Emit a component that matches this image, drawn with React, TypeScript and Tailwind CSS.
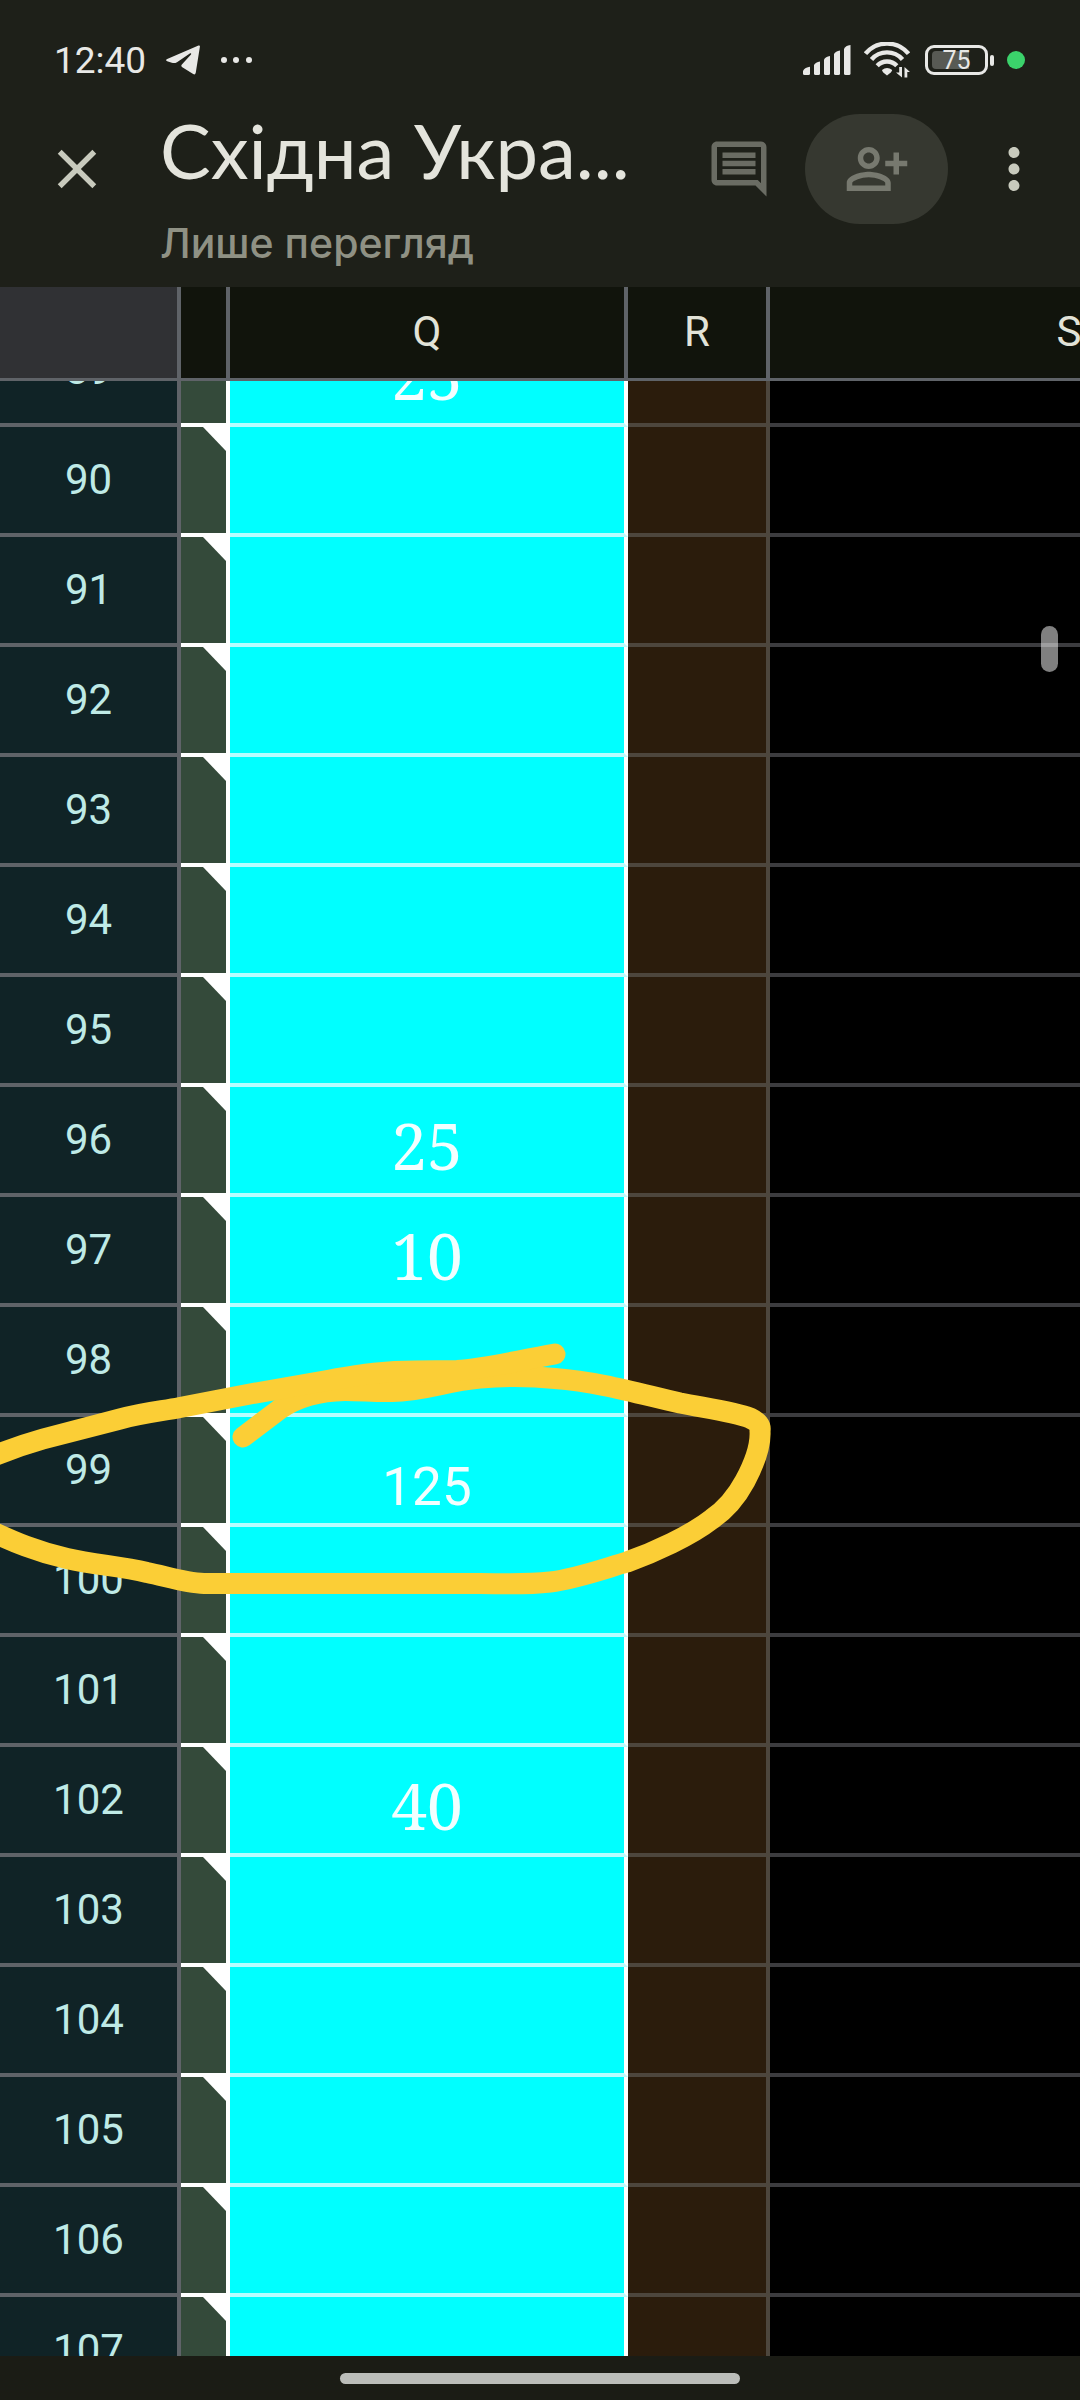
import { useLayoutEffect, useRef } from "react";
import { MdClose, MdMoreVert, MdOutlineComment } from "react-icons/md";

type Row = { n: number; value?: string; sans?: boolean };

const VALUES: Record<number, Omit<Row, "n">> = {
  89: { value: "25" },
  96: { value: "25" },
  97: { value: "10" },
  99: { value: "125", sans: true },
  102: { value: "40" },
};

const ROWS: Row[] = Array.from({ length: 19 }, (_, i) => ({ n: 89 + i, ...VALUES[89 + i] }));

// Part of row 89 that is already scrolled under the column header
const INITIAL_SCROLL = 64;

export default function App() {
  return (
    <div className="flex h-screen flex-col overflow-hidden bg-[#1e2019] font-['Roboto',sans-serif]">
      <StatusBar />
      <TopBar />
      <Sheet />
      <footer className="flex h-11 shrink-0 items-center justify-center bg-[#1b1c15]">
        <div className="h-[11px] w-[37%] rounded-full bg-[#bbbdb9]" />
      </footer>
    </div>
  );
}

function StatusBar() {
  return (
    <div className="flex h-[114px] shrink-0 items-center justify-between pr-[55px] pl-[54px] pt-[6px] text-[#e8e8e6]">
      <div className="flex items-center gap-5">
        <span className="text-[37px] leading-none">12:40</span>
        <TelegramIcon />
        <svg viewBox="0 0 32 8" className="h-2 w-8" fill="currentColor" aria-hidden>
          <circle cx="4" cy="4" r="3" />
          <circle cx="16" cy="4" r="3" />
          <circle cx="29" cy="4" r="3" />
        </svg>
      </div>
      <div className="flex items-center">
        <SignalIcon />
        <WifiIcon />
        <div className="ml-[15px] flex items-center gap-[2px]">
          <div className="relative flex h-[30px] w-[63px] items-center justify-center rounded-[9px] border-3 border-[#e8e8e6]">
            <div className="absolute inset-y-[3px] left-1 w-[37px] rounded-l-[4px] bg-[#585a54]" />
            <span className="relative text-[25px] leading-none">75</span>
          </div>
          <div className="h-[11px] w-1 rounded-full bg-[#e8e8e6]" />
        </div>
        <div className="ml-[13px] size-[18px] rounded-full bg-[#3bd26b]" />
      </div>
    </div>
  );
}

function TopBar() {
  return (
    <header className="flex shrink-0 items-start pb-[14px] pr-[33px] pl-[44px]">
      <button aria-label="Закрити" className="flex h-[110px] items-center text-[#c8cabd]">
        <MdClose className="size-[66px]" />
      </button>
      <div className="ml-[50px] min-w-0 flex-1 whitespace-nowrap">
        <h1 className="font-['Lato',sans-serif] text-[76px] leading-[72px] text-[#e4e4dc]">Східна Укра...</h1>
        <p className="mt-[27px] font-['Inter',sans-serif] text-[41px] font-medium leading-[60px] text-[#8f9184]">
          Лише перегляд
        </p>
      </div>
      <div className="flex items-center gap-[33px]">
        <button aria-label="Коментарі" className="text-[#6a6c63]">
          <MdOutlineComment className="size-[66px]" />
        </button>
        <button
          aria-label="Надати доступ"
          className="flex h-[110px] w-[143px] items-center justify-center rounded-full bg-[#363830] text-[#77796f]"
        >
          <PersonAddIcon />
        </button>
        <button aria-label="Інші опції" className="text-[#c8cabd]">
          <MdMoreVert className="size-[66px]" />
        </button>
      </div>
    </header>
  );
}

function Sheet() {
  const ref = useRef<HTMLDivElement>(null);

  useLayoutEffect(() => {
    if (ref.current) ref.current.scrollTop = INITIAL_SCROLL;
  }, []);

  const head =
    "sticky top-0 z-10 h-[94px] border-b-3 border-[#5f6368] p-0 pb-[2px] text-[42px] font-normal text-[#e2e3d8]";

  return (
    <main className="relative min-h-0 flex-1 overflow-hidden bg-black">
      <div ref={ref} className="h-full overflow-auto [scrollbar-width:none]">
        <table className="w-[1368px] table-fixed border-separate border-spacing-0">
          <colgroup>
            <col className="w-[181px]" />
            <col className="w-[49px]" />
            <col className="w-[398px]" />
            <col className="w-[142px]" />
            <col className="w-[598px]" />
          </colgroup>
          <thead>
            <tr>
              <td className={`${head} border-r-4 bg-[#303134]`} />
              <td className={`${head} border-r-4 bg-[#11140c]`} />
              <th scope="col" className={`${head} border-r-4 bg-[#11140c]`}>Q</th>
              <th scope="col" className={`${head} border-r-4 bg-[#11140c]`}>R</th>
              <th scope="col" className={`${head} bg-[#11140c]`}>S</th>
            </tr>
          </thead>
          <tbody>
            {ROWS.map((row) => (
              <SheetRow key={row.n} {...row} />
            ))}
          </tbody>
        </table>
      </div>

      {/* scroll thumb */}
      <div className="absolute right-[22px] top-[339px] h-[46px] w-[17px] rounded-full bg-white/50" />

      <Marker />
    </main>
  );
}

function SheetRow({ n, value, sans }: Row) {
  return (
    <tr>
      <th
        scope="row"
        className="h-[110px] border-b-4 border-r-4 border-[#5f6368] bg-[#102326] p-0 text-[42px] font-normal leading-none text-[#bfeae6]"
      >
        {n}
      </th>
      <td className="relative border-b-4 border-r-4 border-white bg-[#344a3a] p-0">
        {/* note corner */}
        <svg viewBox="0 0 23 24" className="absolute right-0 top-0 h-6 w-[23px]" aria-hidden>
          <path d="M0 0H23V24Z" fill="#fff" />
        </svg>
      </td>
      <td className="border-b-4 border-r-4 border-b-[#b8fdff] border-r-white bg-[#00ffff] p-0 pb-1 text-center align-bottom text-[#f2ffff]">
        {value && (
          <span
            className={
              sans
                ? "block text-[53px] leading-[64px]"
                : "block font-['Noto_Serif','DejaVu_Serif',serif] text-[64px] leading-[86px]"
            }
          >
            {value}
          </span>
        )}
      </td>
      <td className="border-b-4 border-r-4 border-[#4d463d] bg-[#2b1c0c] p-0" />
      <td className="border-b-4 border-[#3c3c3f] bg-black p-0" />
    </tr>
  );
}

/** Freehand loop drawn round row 99. */
function Marker() {
  return (
    <svg
      viewBox="0 1340 1080 260"
      className="pointer-events-none absolute left-0 top-[1053px] z-20 h-[260px] w-[1080px]"
      fill="none"
      stroke="#fbce36"
      strokeWidth="21"
      strokeLinecap="round"
      strokeLinejoin="round"
      aria-hidden
    >
      <path
        d="M243 1437 L280 1409 C300 1395 322 1391 345 1390.500
        C362 1390.500 375 1392 392 1391.500 C425 1391 445 1381 480 1378
        C505 1376 530 1376 555 1378.500 C600 1382 640 1394 680 1403
        C705 1408 735 1412 750 1418 C758 1422 761 1425 760 1431
        C761 1447 753 1466 745 1481 C738 1494 728 1508 712 1519
        C690 1536 655 1552 627 1562 C600 1570 575 1579 550 1582
        C525 1585 500 1583.500 480 1583.500 L204 1583.500
        C185 1583 165 1576 147 1572.500 C120 1566 95 1565 67 1558.500
        C38 1552 15 1543 -20 1526"
      />
      <path
        d="M-20 1462 C0 1453 18 1446 43 1439 L120 1419
        C145 1412 163 1411 180 1407.500 L250 1394
        L330 1380 C365 1374 385 1371 415 1371
        L457 1370.500 C485 1369 515 1361 555 1354"
      />
    </svg>
  );
}

function TelegramIcon() {
  return (
    <svg viewBox="0 0 34 30" className="h-[30px] w-[34px]" fill="currentColor" aria-hidden>
      <path d="M32.500.6C33.600.1 34 .7 33.900 1.800L29.800 27.600C29.500 29.200 28.600 29.900 27.200 29L16.300 22.200C15 21.300 15 20.300 16.100 19.200L25 9.400C25.600 8.600 24.800 8 23.800 8.600L11 17.200C9.300 18.200 7.600 18.300 5.800 17.700L1.200 16.300C-.3 15.700-.2 14.800 1.200 14Z" />
    </svg>
  );
}

function SignalIcon() {
  return (
    <svg viewBox="0 0 48 30" className="h-[30px] w-12" fill="currentColor" aria-hidden>
      <path d="M0 26C1 23.500 4 22 7 21.700V28.500Q7 30 5.500 30H1.500Q0 30 0 28.500Z" />
      <path d="M11 20C12 18 14 17 17 16.500V28.500Q17 30 15.500 30H12.500Q11 30 11 28.500Z" />
      <path d="M21 14.500C22 12.500 24 11.500 27 11V28.500Q27 30 25.500 30H22.500Q21 30 21 28.500Z" />
      <path d="M31 9C32 7 34 6 37 5.500V28.500Q37 30 35.500 30H32.500Q31 30 31 28.500Z" />
      <path d="M41 4C42 1.500 44 .5 47.500 0V28.500Q47.500 30 46 30H42.500Q41 30 41 28.500Z" />
    </svg>
  );
}

function WifiIcon() {
  return (
    <svg viewBox="0 0 46 36" className="ml-[13px] h-9 w-[46px]" aria-hidden>
      <g fill="none" stroke="currentColor" strokeWidth="4.400">
        <path d="M1.500 11.700A28 28 0 0 1 44.500 11.700" />
        <path d="M7.500 17.500A20.500 20.500 0 0 1 38.500 17.500" />
        <path d="M13.200 23.700A13.500 13.500 0 0 1 32.800 23.700" />
      </g>
      <path d="M18 28Q23 24 28.200 28Q28 30 23 33.500Q18 30 18 28Z" fill="currentColor" />
      <path d="M35.200 25H38V35.500L32 30.500H35.200ZM40.500 35.500V25L46 30H43.300V35.500Z" fill="currentColor" />
    </svg>
  );
}

function PersonAddIcon() {
  return (
    <svg viewBox="0 0 24 24" className="size-[66px]" fill="currentColor" aria-hidden>
      <path d="M13 8c0-2.210-1.790-4-4-4S5 5.790 5 8s1.790 4 4 4 4-1.790 4-4zm-2 0c0 1.100-.9 2-2 2s-2-.9-2-2 .9-2 2-2 2 .9 2 2z" />
      <path d="M1 17v3h16v-3c0-2.660-5.330-4-8-4s-8 1.340-8 4zm2 1v-.990C3.200 16.290 6.300 15 9 15s5.800 1.290 6 2v1H3z" />
      <path d="M20 9V6h-2v3h-3v2h3v3h2v-3h3V9h-3z" />
    </svg>
  );
}
